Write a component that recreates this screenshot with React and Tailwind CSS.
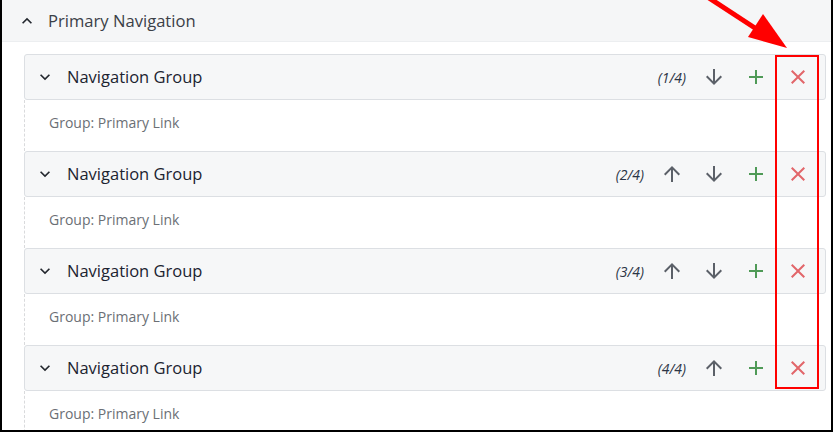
import React from "react";

const ArrowUp = ({ className }) => (
  <svg viewBox="0 0 24 24" width="24" height="24" className={className} fill="currentColor">
    <path d="M4 12l1.41 1.41L11 7.83V20h2V7.83l5.58 5.59L20 12l-8-8-8 8z" />
  </svg>
);
const ArrowDown = ({ className }) => (
  <svg viewBox="0 0 24 24" width="24" height="24" className={className} fill="currentColor">
    <path d="M20 12l-1.41-1.41L13 16.17V4h-2v12.17l-5.58-5.59L4 12l8 8 8-8z" />
  </svg>
);
const Plus = ({ className }) => (
  <svg viewBox="0 0 24 24" width="24" height="24" className={className} fill="currentColor">
    <path d="M19 13h-6v6h-2v-6H5v-2h6V5h2v6h6v2z" />
  </svg>
);
const Close = ({ className }) => (
  <svg viewBox="0 0 24 24" width="24" height="24" className={className} fill="currentColor">
    <path d="M19 6.41L17.59 5 12 10.59 6.41 5 5 6.41 10.59 12 5 17.59 6.41 19 12 13.41 17.59 19 19 17.59 13.41 12z" />
  </svg>
);
const ExpandMore = ({ className }) => (
  <svg viewBox="0 0 24 24" width="20" height="20" className={className} fill="currentColor">
    <path d="M16.59 8.59L12 13.17 7.41 8.59 6 10l6 6 6-6z" />
  </svg>
);
const ExpandLess = ({ className }) => (
  <svg viewBox="0 0 24 24" width="20" height="20" className={className} fill="currentColor">
    <path d="M12 8l-6 6 1.41 1.41L12 10.83l4.59 4.58L18 14z" />
  </svg>
);

const groups = [
  { label: "(1/4)", up: false, down: true },
  { label: "(2/4)", up: true, down: true },
  { label: "(3/4)", up: true, down: true },
  { label: "(4/4)", up: true, down: false },
];

function Btn({ children }) {
  return <div className="w-[42px] h-[44px] flex items-center justify-center">{children}</div>;
}

export default function App() {
  return (
    <div
      className="relative w-[833px] h-[432px] overflow-hidden bg-white border-l-2 border-r-2 border-b-2 border-black"
      style={{ fontFamily: '"Open Sans", "Noto Sans", sans-serif' }}
    >
      <div className="h-[42px] bg-[#f5f6f7] border-b border-[#eceef0] flex items-center pl-[15px]">
        <ExpandLess className="text-[#23272e]" />
        <span className="ml-[11px] text-[16.6px] text-[#3b4047] leading-[22px]">Primary Navigation</span>
      </div>
      <div className="pt-[12px] pl-[22px] pr-[5px]">
        {groups.map((g, i) => (
          <div key={i}>
            <div className="h-[46px] bg-[#f6f7f8] border border-[#dcdfe3] rounded-[3px] flex items-center pl-[10px] pr-[6px]">
              <ExpandMore className="text-[#23272e]" />
              <span className="ml-[12px] text-[16.5px] text-[#1c2330] leading-[22px]">Navigation Group</span>
              <div className="flex-1" />
              <span className="mr-[7px] text-[14px] italic text-[#2b3445]">{g.label}</span>
              {g.up && (
                <Btn>
                  <ArrowUp className="text-[#5b6068]" />
                </Btn>
              )}
              {g.down && (
                <Btn>
                  <ArrowDown className="text-[#5b6068]" />
                </Btn>
              )}
              <Btn>
                <Plus className="text-[#4f9a57]" />
              </Btn>
              <Btn>
                <Close className="text-[#e2666a]" />
              </Btn>
            </div>
            <div className="h-[51px] border-l border-dashed border-[#d9dadc] pl-[24px] pt-[10px]">
              <span className="text-[14px] leading-[20px] text-[#6b6f75]">Group: Primary Link</span>
            </div>
          </div>
        ))}
      </div>
      <div className="absolute left-[773px] top-[55px] w-[44px] h-[334px] border-2 border-[#ff0000]" />
      <svg className="absolute left-[-2px] top-0" width="833" height="432" viewBox="0 0 833 432">
        <line x1="706" y1="-4" x2="758" y2="30" stroke="#ff0000" strokeWidth="5" />
        <polygon points="787,48 748,37 763,14" fill="#ff0000" />
      </svg>
    </div>
  );
}
